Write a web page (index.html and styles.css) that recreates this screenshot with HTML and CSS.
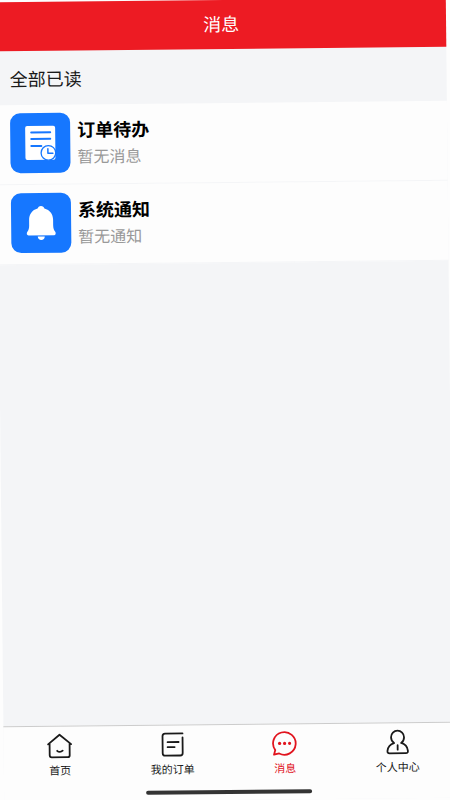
FILE: index.html
```html
<!DOCTYPE html>
<html lang="zh-CN">
  <head>
    <meta charset="UTF-8" />
    <meta name="viewport" content="width=device-width, initial-scale=1.0" />
    <title>消息</title>
    <link rel="stylesheet" href="styles.css">
  </head>
  <body>
    <div class="app">
      <header class="header">
        <h1>消息</h1>
      </header>

      <main class="content">
        <div class="toolbar">
          <button type="button" class="read-all">全部已读</button>
        </div>

        <div class="list">
          <a href="#orders" class="item">
            <span class="item-icon">
              <svg viewBox="0 0 60 60" width="60" height="60" aria-hidden="true">
                <rect x="15" y="13" width="30" height="34" rx="2" fill="#fff" />
                <path d="M21 19.500h19M21 26h19M21 33h10" fill="none" stroke="#1677ff" stroke-width="2" stroke-linecap="round" />
                <circle cx="38" cy="40" r="7.300" fill="#fff" stroke="#1677ff" stroke-width="1.300" />
                <path d="M37.500 36v4.500h5" fill="none" stroke="#1677ff" stroke-width="1.500" stroke-linecap="round" stroke-linejoin="round" />
              </svg>
            </span>
            <span class="item-text">
              <span class="item-title">订单待办</span>
              <span class="item-desc">暂无消息</span>
            </span>
          </a>
          <a href="#notices" class="item">
            <span class="item-icon">
              <svg viewBox="0 0 60 60" width="60" height="60" aria-hidden="true">
                <path d="M30 13c1.800 0 3 1.200 3.400 2.600C38.800 17 42 21.300 42 27v5.500c0 3 .7 5 2 6.500.9 1.200.5 3.500-1.300 3.500H17.300c-1.800 0-2.200-2.300-1.300-3.500 1.300-1.500 2-3.500 2-6.500V27c0-5.700 3.200-10 8.600-11.400C27 14.200 28.200 13 30 13z" fill="#fff" />
                <path d="M26.500 43.500h7c0 2-1.500 3.500-3.500 3.500s-3.500-1.500-3.500-3.500z" fill="#fff" />
              </svg>
            </span>
            <span class="item-text">
              <span class="item-title">系统通知</span>
              <span class="item-desc">暂无通知</span>
            </span>
          </a>
        </div>
      </main>

      <footer class="footer">
        <nav class="tabs">
          <a href="#home" class="tab">
            <svg viewBox="0 0 26 26" width="26" height="26" aria-hidden="true">
              <path d="M1.500 11.500L13 2l11.500 9.500M3 11v11.500C3 24 3.500 24.500 5 24.500h16c1.500 0 2-.5 2-2V11" />
              <path d="M10.500 18c1.500 1.600 3.800 1.600 5.500 0" />
            </svg>
            <span>首页</span>
          </a>
          <a href="#my-orders" class="tab">
            <svg viewBox="0 0 26 26" width="26" height="26" aria-hidden="true">
              <path d="M23 2H5.500Q3 2 3 4.500v17Q3 24 5.500 24h15q2.500 0 2.500-2.500V6" />
              <path d="M8 10.500h11M8 15.500h7" />
            </svg>
            <span>我的订单</span>
          </a>
          <a href="#messages" class="tab active">
            <svg viewBox="0 0 26 26" width="26" height="26" aria-hidden="true">
              <path d="M3.600 19.600A11.300 11.300 0 1 1 7.500 23L2.300 24.200z" />
              <g fill="currentColor" stroke="none">
                <circle cx="8" cy="13" r="1.600" />
                <circle cx="13" cy="13" r="1.600" />
                <circle cx="18" cy="13" r="1.600" />
              </g>
            </svg>
            <span>消息</span>
          </a>
          <a href="#profile" class="tab">
            <svg viewBox="0 0 26 26" width="26" height="26" aria-hidden="true">
              <path d="M9.500 13.800C7.400 12.500 6.500 10.300 6.500 8a6.500 6.500 0 0 1 13 0c0 2.300-.9 4.500-3 5.800 4 1.200 6.300 4 6.700 7.700.2 1.700-.3 2.500-2.200 2.500H5c-1.900 0-2.400-.8-2.200-2.500.4-3.700 2.700-6.500 6.700-7.700z" />
              <path d="M13 16v4.500" />
            </svg>
            <span>个人中心</span>
          </a>
        </nav>
        <div class="home-bar"></div>
      </footer>
    </div>
  </body>
</html>
```
FILE: styles.css
```css
:root {
  --red: #ed1b23;
  --blue: #1677ff;
  --page: #f4f5f7;
  --surface: #fdfdfd;
}

*,
*::before,
*::after {
  box-sizing: border-box;
  margin: 0;
  padding: 0;
}

body {
  background-color: var(--surface);
  color: #1a1a1a;
  font-family: "Noto Sans CJK SC", sans-serif;
  overflow: hidden;
}

a {
  color: inherit;
  text-decoration: none;
}

/* the whole screen leans slightly to the left */
.app {
  min-height: 100vh;
  display: flex;
  flex-direction: column;
  background-color: var(--page);
  transform: rotate(-0.6deg);
}

.header {
  height: 49px;
  padding-bottom: 3px;
  display: flex;
  align-items: center;
  justify-content: center;
  background-color: var(--red);
  color: white;
}

.header h1 {
  font-size: 18px;
  font-weight: 400;
  line-height: 26px;
}

.content {
  flex: 1;
}

.toolbar {
  padding: 14px 13px;
}

.read-all {
  display: block;
  border: none;
  background: none;
  color: inherit;
  font-family: inherit;
  font-size: 18px;
  line-height: 26px;
  cursor: pointer;
}

.item {
  display: flex;
  gap: 7px;
  padding: 8px 13px 11px;
  background-color: var(--surface);
  border-bottom: 1px solid var(--page);
}

.item-icon {
  width: 60px;
  height: 60px;
  border-radius: 10px;
  background-color: var(--blue);
}

.item-icon svg {
  display: block;
}

.item-text {
  display: flex;
  flex-direction: column;
  padding-top: 2px;
}

.item-title {
  color: black;
  font-size: 18px;
  font-weight: 700;
  line-height: 28px;
}

.item-desc {
  color: #999;
  font-size: 16px;
  line-height: 26px;
}

.footer {
  padding: 6px 0;
  background-color: var(--surface);
  border-top: 1px solid #ccc;
}

.tabs {
  display: grid;
  grid-template-columns: repeat(4, 1fr);
}

.tab {
  display: flex;
  flex-direction: column;
  align-items: center;
  gap: 3px;
  font-size: 11px;
  line-height: 16px;
}

.tab svg {
  fill: none;
  stroke: currentColor;
  stroke-width: 1.8;
  stroke-linecap: round;
  stroke-linejoin: round;
}

.tab.active {
  color: #e1141e;
}

.home-bar {
  width: 37%;
  height: 4px;
  margin: 14px auto 0;
  border-radius: 2px;
  background-color: #333;
}
```
